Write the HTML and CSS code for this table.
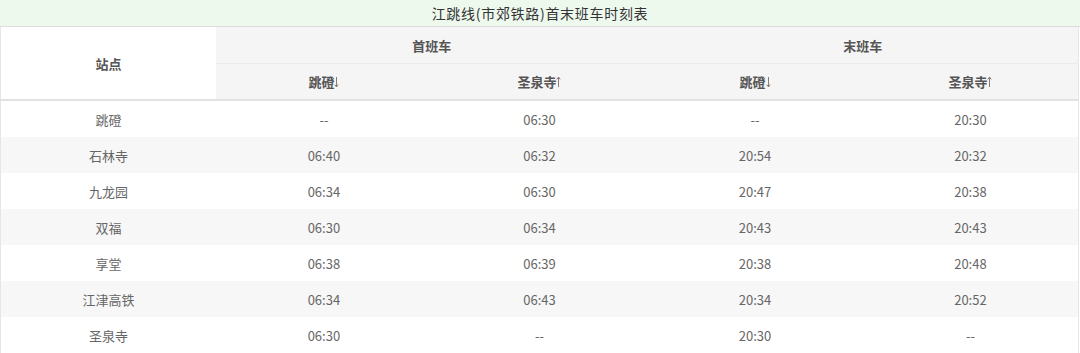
FILE: index.html
```html
<!DOCTYPE html>
<html lang="zh">
<head>
<meta charset="utf-8">
<link rel="stylesheet" href="styles.css">
</head>
<body>
<div class="title">江跳线(市郊铁路)首末班车时刻表</div>
<table class="tt">
  <colgroup><col><col><col><col><col></colgroup>
  <thead>
    <tr class="h1">
      <th rowspan="2" class="st">站点</th>
      <th colspan="2">首班车</th>
      <th colspan="2">末班车</th>
    </tr>
    <tr class="h2">
      <th>跳磴<svg class="ar" viewBox="0 0 5 12" width="5" height="12"><path d="M2.5 1V10.5M0.8 8.6L2.5 11L4.2 8.6"/></svg></th>
      <th>圣泉寺<svg class="ar" viewBox="0 0 5 12" width="5" height="12"><path d="M2.5 11V1.5M0.8 3.4L2.5 1L4.2 3.4"/></svg></th>
      <th>跳磴<svg class="ar" viewBox="0 0 5 12" width="5" height="12"><path d="M2.5 1V10.5M0.8 8.6L2.5 11L4.2 8.6"/></svg></th>
      <th>圣泉寺<svg class="ar" viewBox="0 0 5 12" width="5" height="12"><path d="M2.5 11V1.5M0.8 3.4L2.5 1L4.2 3.4"/></svg></th>
    </tr>
  </thead>
  <tbody>
    <tr><td>跳磴</td><td>--</td><td>06:30</td><td>--</td><td>20:30</td></tr>
    <tr><td>石林寺</td><td>06:40</td><td>06:32</td><td>20:54</td><td>20:32</td></tr>
    <tr><td>九龙园</td><td>06:34</td><td>06:30</td><td>20:47</td><td>20:38</td></tr>
    <tr><td>双福</td><td>06:30</td><td>06:34</td><td>20:43</td><td>20:43</td></tr>
    <tr><td>享堂</td><td>06:38</td><td>06:39</td><td>20:38</td><td>20:48</td></tr>
    <tr><td>江津高铁</td><td>06:34</td><td>06:43</td><td>20:34</td><td>20:52</td></tr>
    <tr><td>圣泉寺</td><td>06:30</td><td>--</td><td>20:30</td><td>--</td></tr>
  </tbody>
</table>
</body>
</html>
```
FILE: styles.css
```css
html, body {
  margin: 0;
  padding: 0;
  background: #ffffff;
  font-family: "Noto Sans CJK SC", "Open Sans", sans-serif;
  color: #666666;
  overflow: hidden;
}
.title {
  height: 26px;
  line-height: 26px;
  background: #eef9ee;
  border-bottom: 1px solid #dddddd;
  text-align: center;
  font-size: 14px;
  letter-spacing: 0.7px;
  color: #333333;
}
.tt {
  width: 1079px;
  border-collapse: collapse;
  table-layout: fixed;
  border-left: 1px solid #e6e6e6;
  border-right: 1px solid #e6e6e6;
}
.tt col { width: 20%; }
.tt th {
  font-size: 13px;
  font-weight: bold;
  color: #555555;
  background: #f5f5f5;
  text-align: center;
  padding: 0;
}
.tt th.st {
  background: #ffffff;
}
.h1 th {
  height: 36px;
  border-bottom: 1px solid #ebebeb;
}
.h1 th.st { border-bottom: 2px solid #e2e2e2; }
.h2 th {
  height: 35px;
  border-bottom: 2px solid #e2e2e2;
}
.ar {
  vertical-align: -1px;
  margin-left: 0;
  fill: none;
  stroke: #8a7a72;
  stroke-width: 1;
}
.tt td {
  height: 36px;
  padding: 0;
  text-align: center;
  font-size: 13px;
  color: #666666;
}
.tt tbody tr:nth-child(even) td {
  background: #f7f7f7;
}
```
